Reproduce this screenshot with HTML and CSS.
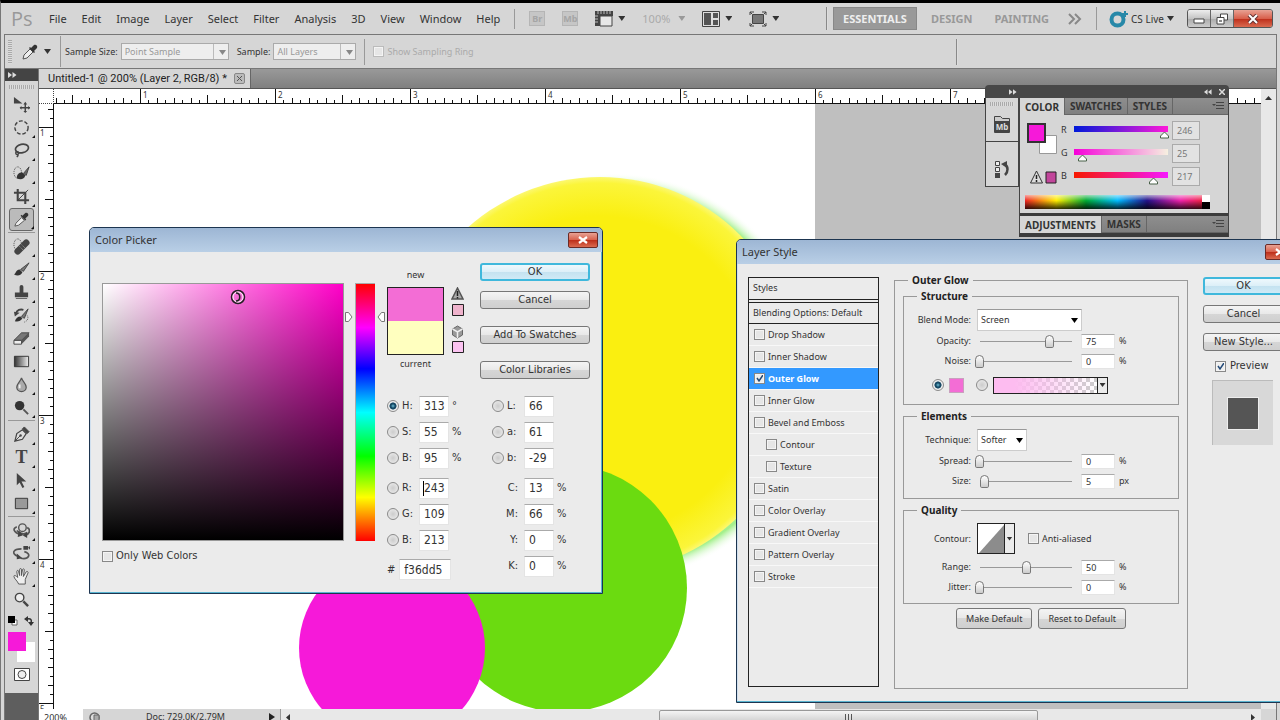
FILE: index.html
```
<!DOCTYPE html>
<html lang="en">
<head>
    <meta charset="UTF-8">
    <meta name="viewport" content="width=device-width, initial-scale=1.0">
    <title>Untitled-1 @ 200%</title>
    <link rel="stylesheet" href="styles.css">
</head>
<body>
    <div class="app">
        <header class="menubar">
            <span class="ps-logo">Ps</span>
            <nav class="menus">
                <a href="#">File</a>
                <a href="#">Edit</a>
                <a href="#">Image</a>
                <a href="#">Layer</a>
                <a href="#">Select</a>
                <a href="#">Filter</a>
                <a href="#">Analysis</a>
                <a href="#">3D</a>
                <a href="#">View</a>
                <a href="#">Window</a>
                <a href="#">Help</a>
            </nav>
            <div class="app-tools">
                <button class="chip" disabled>Br</button>
                <button class="chip" disabled>Mb</button>
                <button class="icon-btn" aria-label="View extras">
                    <svg width="18" height="16" viewBox="0 0 18 16"><path d="M0 0h18v5H5v10H0z" fill="#444"/><path d="M5 5h12v10H5z" fill="#e8e8e8" stroke="#444"/><path d="M3 0v3M6 0v3M9 0v3M12 0v3M15 0v3M0 5h3M0 8h3M0 11h3" stroke="#bbb"/></svg>
                    <span class="caret"></span>
                </button>
                <button class="icon-btn zoom-level" disabled>100% <span class="caret"></span></button>
                <button class="icon-btn" aria-label="Arrange documents">
                    <svg width="18" height="16" viewBox="0 0 18 16"><path d="M.5.5h17v15H.5z" fill="#ddd" stroke="#444"/><path d="M2 2h7v12H2zM11 2h5v5h-5zM11 9h5v5h-5z" fill="#555"/></svg>
                    <span class="caret"></span>
                </button>
                <button class="icon-btn" aria-label="Screen mode">
                    <svg width="18" height="16" viewBox="0 0 18 16"><path d="M3.500 3.500h11v9h-11z" fill="#777" stroke="#444"/><path d="M1 4V1h4M13 1h4v3M1 12v3h4M13 15h4v-3M1 1l2 2M17 1l-2 2M1 15l2-2M17 15l-2-2" fill="none" stroke="#444"/></svg>
                    <span class="caret"></span>
                </button>
            </div>
            <div class="workspaces">
                <button class="workspace active">ESSENTIALS</button>
                <button class="workspace">DESIGN</button>
                <button class="workspace">PAINTING</button>
                <button class="more" aria-label="More workspaces">
                    <svg width="14" height="12" viewBox="0 0 14 12"><path d="M1 1l5 5-5 5M7 1l5 5-5 5" fill="none" stroke="#888" stroke-width="2"/></svg>
                </button>
            </div>
            <button class="cs-live">
                <svg width="19" height="18" viewBox="0 0 19 18"><circle cx="8.500" cy="9.500" r="6" fill="none" stroke="#2788a8" stroke-width="4"/><path d="M16 1v6M13 4h6" stroke="#2788a8" stroke-width="2"/></svg>
                <span>CS Live</span>
                <span class="caret"></span>
            </button>
            <div class="window-buttons">
                <button aria-label="Minimize"><svg width="12" height="12" viewBox="0 0 12 12"><path d="M1 6h10v4H1z" fill="#fff" stroke="#444"/></svg></button>
                <button aria-label="Restore"><svg width="12" height="12" viewBox="0 0 12 12"><path d="M4.500 1h7v6h-7z" fill="#fff" stroke="#444"/><path d="M1 4.500h7V11H1z" fill="#fff" stroke="#444"/><path d="M3 7h3v2H3z" fill="#888"/></svg></button>
                <button class="close" aria-label="Close"><svg width="12" height="10" viewBox="0 0 12 10"><path d="M2 1l8 8M10 1L2 9" stroke="#633" stroke-width="4"/><path d="M2 1l8 8M10 1L2 9" stroke="#fff" stroke-width="2"/></svg></button>
            </div>
        </header>

        <div class="options">
            <span class="grip-v"></span>
            <button class="icon-btn eyedropper" aria-label="Eyedropper presets">
                <svg width="18" height="18" viewBox="0 0 18 18"><path d="M2 16l1-4 6-6 3 3-6 6z" fill="#eee" stroke="#555"/><path d="M8 5l5 5 1-1-1-1 3-3c1-2-1-4-3-3l-3 3-1-1z" fill="#333"/></svg>
                <span class="caret"></span>
            </button>
            <label class="sample-size">Sample Size:
                <select disabled><option>Point Sample</option></select>
            </label>
            <label class="sample-layers">Sample:
                <select disabled><option>All Layers</option></select>
            </label>
            <label class="ring"><input type="checkbox" class="check" disabled>Show Sampling Ring</label>
            <span class="end-mark"></span>
        </div>

        <div class="workarea">
            <aside class="toolbox">
                <div class="dark-head"><svg width="9" height="6" viewBox="0 0 9 6"><path d="M0 0l4 3-4 3zM4.500 0l4 3-4 3z" fill="#ddd"/></svg></div>
                <span class="grip-h"></span>
                <button class="tool" aria-label="Move"><svg viewBox="0 0 18 18"><path d="M1 1l9 7H1z" fill="#444"/><path d="M13 8v9M8 12.500h10" stroke="#444" stroke-width="1.500"/><path d="M11 9h4l-2-3zM11 16h4l-2 2zM9 10.500v4l-2-2zM16 10.500v4l2-2z" fill="#444"/></svg></button>
                <button class="tool more-tools" aria-label="Elliptical marquee"><svg viewBox="0 0 18 18"><circle cx="9" cy="9" r="7" fill="none" stroke="#444" stroke-width="1.500" stroke-dasharray="4 2"/></svg></button>
                <button class="tool more-tools" aria-label="Lasso"><svg viewBox="0 0 18 18"><ellipse cx="9.500" cy="7" rx="7" ry="4.500" fill="none" stroke="#444" stroke-width="1.800" transform="rotate(-12 9 7)"/><path d="M4 10c-2 1-1 4 1 3s1-3-1-3M5 13c1 1 0 2-1 3" fill="none" stroke="#444" stroke-width="1.500"/></svg></button>
                <button class="tool more-tools" aria-label="Quick selection"><svg viewBox="0 0 18 18"><ellipse cx="5" cy="8" rx="4" ry="6" fill="none" stroke="#444" stroke-dasharray="1 1"/><path d="M4 14c0-4 2-6 6-6l3 3c-1 4-5 5-9 3z" fill="#333"/><path d="M11 9l6-7-3 9z" fill="#666" stroke="#444"/></svg></button>
                <button class="tool more-tools" aria-label="Crop"><svg viewBox="0 0 18 18"><path d="M5 1v12h12M1 5h12v12" fill="none" stroke="#444" stroke-width="2.200"/><path d="M5 13L16 2" stroke="#444"/></svg></button>
                <button class="tool more-tools selected" aria-label="Eyedropper"><svg viewBox="0 0 18 18"><path d="M2 16l1-3 6-6 3 3-6 5z" fill="#eee" stroke="#555"/><path d="M8 5l5 5 1-1-1-1 3-3c1-2-1-4-3-3l-3 3-1-1z" fill="#333"/></svg></button>
                <hr>
                <button class="tool more-tools" aria-label="Healing brush"><svg viewBox="0 0 18 18"><ellipse cx="5" cy="7" rx="4" ry="6" fill="none" stroke="#444" stroke-dasharray="1 1"/><path d="M5 14l9-9" stroke="#444" stroke-width="7" stroke-linecap="round"/><path d="M7 9l4 4M9 7l4 4" stroke="#aaa" stroke-dasharray="1 1"/></svg></button>
                <button class="tool more-tools" aria-label="Brush"><svg viewBox="0 0 18 18"><path d="M1 14c2 0 2-5 6-5l3 3c-2 4-6 4-9 2z" fill="#333"/><path d="M8 9l9-7-6 9z" fill="#777" stroke="#444"/></svg></button>
                <button class="tool more-tools" aria-label="Clone stamp"><svg viewBox="0 0 18 18"><path d="M7 3a2 2 0 0 1 4 0v6h5v5H2V9h5zM3 15h12v1H3z" fill="#444"/></svg></button>
                <button class="tool more-tools" aria-label="History brush"><svg viewBox="0 0 18 18"><path d="M2 15c1-3 3-5 6-5l2 2c-2 3-5 4-8 3z" fill="#333"/><path d="M9 10l7-8-4 10z" fill="#777" stroke="#444"/><path d="M3 7c1-4 5-5 8-4" fill="none" stroke="#444" stroke-width="2"/><path d="M1 5l6 1-5 4z" fill="#444"/><path d="M15 9c2 3 0 6-3 7" fill="none" stroke="#555" stroke-dasharray="1 1"/></svg></button>
                <button class="tool more-tools" aria-label="Eraser"><svg viewBox="0 0 18 18"><path d="M1 11L9 3h8l-8 8z" fill="#777" stroke="#444"/><path d="M1 11h8v4H1z" fill="#eee" stroke="#444"/><path d="M9 15l8-8V3l-8 8z" fill="#555"/></svg></button>
                <button class="tool more-tools" aria-label="Gradient"><svg viewBox="0 0 18 18"><defs><linearGradient id="toolGradient"><stop stop-color="#333"/><stop offset="1" stop-color="#eee"/></linearGradient></defs><path d="M1.500 3.500h15v11h-15z" fill="url(#toolGradient)" stroke="#333"/></svg></button>
                <button class="tool more-tools" aria-label="Blur"><svg viewBox="0 0 18 18"><path d="M9 2c1 4 5 6 5 10a5 4.500 0 0 1-10 0c0-4 4-6 5-10z" fill="#aaa" stroke="#555" stroke-width="1.300"/><path d="M7 9v4" stroke="#eee" stroke-width="2"/></svg></button>
                <button class="tool more-tools" aria-label="Burn"><svg viewBox="0 0 18 18"><circle cx="7" cy="7" r="5" fill="#333"/><path d="M11 11l5 5" stroke="#555" stroke-width="2"/></svg></button>
                <hr>
                <button class="tool more-tools" aria-label="Pen"><svg viewBox="0 0 18 18"><path d="M2 16l2-8 6-4 4 4-4 6z" fill="#ddd" stroke="#444" stroke-width="1.300"/><path d="M2 16l6-6M10 3l5 5 2-2-5-5z" fill="#444" stroke="#444"/><circle cx="8" cy="10" r="1.300" fill="#444"/></svg></button>
                <button class="tool more-tools type" aria-label="Type">T</button>
                <button class="tool more-tools" aria-label="Path selection"><svg viewBox="0 0 18 18"><path d="M4 1v13l3-3 3 6 2-1-3-6h5z" fill="#444"/></svg></button>
                <button class="tool more-tools" aria-label="Rectangle"><svg viewBox="0 0 18 18"><path d="M2.500 3.500h13v11h-13z" fill="#999" stroke="#333"/></svg></button>
                <hr>
                <button class="tool more-tools" aria-label="3D rotate"><svg viewBox="0 0 18 18"><circle cx="10" cy="6" r="4" fill="none" stroke="#555" stroke-width="1.500"/><path d="M4 5C-1 7 1 11 7 13M13 14c6-2 5-7 2-8M4 9c3 3 8 5 11 2" fill="none" stroke="#555" stroke-width="1.800"/><path d="M6 9l5 5-6 2zM15 11l-5 3 5 3z" fill="#444"/></svg></button>
                <button class="tool more-tools" aria-label="3D camera"><svg viewBox="0 0 18 18"><path d="M9 4C0 4-2 9 5 12M8 14c9 2 12-5 4-7" fill="none" stroke="#555" stroke-width="1.800"/><path d="M4 9l6 5-6 1zM11 1h5v4h-5zM16 3l2-2v4z" fill="#444"/></svg></button>
                <button class="tool more-tools" aria-label="Hand"><svg viewBox="0 0 18 18"><path d="M6 17c-1-3-5-6-5-8s2-1 4 1L4 4c0-2 2-2 2 0l1 4V2c0-2 2-2 2 0v6l1-6c1-2 2-1 2 0l-1 7 3-5c1-1 2 0 2 1l-3 7v5z" fill="#eee" stroke="#555"/></svg></button>
                <button class="tool" aria-label="Zoom"><svg viewBox="0 0 18 18"><circle cx="7" cy="7" r="4.500" fill="#eee" stroke="#444" stroke-width="1.500"/><path d="M11 11l5 5" stroke="#444" stroke-width="2.500"/></svg></button>
                <div class="swap-row">
                    <svg width="10" height="10" viewBox="0 0 10 10"><path d="M4 4h5v5H4z" fill="#fff" stroke="#666"/><path d="M0 0h7v7H0z" fill="#000"/></svg>
                    <svg width="10" height="10" viewBox="0 0 10 10"><path d="M3 3c4-1 5 1 4 4" fill="none" stroke="#333" stroke-width="1.500"/><path d="M4 0v6L0 3zM4 6h6l-3 4z" fill="#333"/></svg>
                </div>
                <svg class="swatch-pair" width="27" height="30" viewBox="0 0 27 30"><path d="M9 10h18v20H9z" fill="#fff"/><path d="M0 0h18v19H0z" fill="#f619d9"/></svg>
                <button class="mask-btn" aria-label="Quick mask"><svg width="16" height="13" viewBox="0 0 16 13"><path d="M.5.5h15v12H.5z" fill="#fff" stroke="#444"/><circle cx="8" cy="6.500" r="4" fill="#eee" stroke="#444"/></svg></button>
                <div class="toolbox-end"></div>
            </aside>

            <main class="document">
                <div class="doc-tabs">
                    <div class="doc-tab">
                        <span>Untitled-1 @ 200% (Layer 2, RGB/8) *</span>
                        <button class="tab-close" aria-label="Close document"><svg width="7" height="7" viewBox="0 0 7 7"><path d="M1 1l5 5M6 1L1 6" stroke="#555"/></svg></button>
                    </div>
                </div>
                <div class="doc-view">
                    <div class="ruler-corner"></div>
                    <svg class="ruler-top">
                        <defs>
                            <pattern id="inchesX" x="86" width="135" height="15" patternUnits="userSpaceOnUse">
                                <path d="M.5 0v15M67.500 6v9M17.500 9v6M34.500 9v6M51.500 9v6M84.500 9v6M101.500 9v6M118.500 9v6M8.500 11v4M25.500 11v4M42.500 11v4M59.500 11v4M76.500 11v4M93.500 11v4M109.500 11v4M126.500 11v4" stroke="#111"/>
                            </pattern>
                        </defs>
                        <rect width="100%" height="15" fill="url(#inchesX)"/>
                        <g class="ruler-text">
                            <text x="89" y="9">1</text><text x="224" y="9">2</text><text x="359" y="9">3</text><text x="494" y="9">4</text><text x="629" y="9">5</text><text x="764" y="9">6</text><text x="899" y="9">7</text>
                        </g>
                    </svg>
                    <svg class="ruler-left">
                        <defs>
                            <pattern id="inchesY" y="23" width="15" height="144" patternUnits="userSpaceOnUse">
                                <path d="M0 .5h15M6 72.500h9M9 18.500h6M9 36.500h6M9 54.500h6M9 90.500h6M9 108.500h6M9 126.500h6M11 9.500h4M11 27.500h4M11 45.500h4M11 63.500h4M11 81.500h4M11 99.500h4M11 117.500h4M11 135.500h4" stroke="#111"/>
                            </pattern>
                        </defs>
                        <rect width="15" height="100%" fill="url(#inchesY)"/>
                        <g class="ruler-text">
                            <text x="1" y="32">1</text><text x="1" y="176">2</text><text x="1" y="320">3</text><text x="1" y="464">4</text><text x="1" y="608">5</text>
                        </g>
                    </svg>
                    <div class="canvas">
                        <svg class="artboard" width="761" height="606" viewBox="54 104 761 606">
                            <defs>
                                <radialGradient id="glow" gradientUnits="userSpaceOnUse" cx="614" cy="377" r="204">
                                    <stop offset=".930" stop-color="#a4f08c"/><stop offset="1" stop-color="#fff" stop-opacity="0"/>
                                </radialGradient>
                                <radialGradient id="sun" gradientUnits="userSpaceOnUse" cx="600" cy="375" r="198">
                                    <stop offset=".800" stop-color="#faef10"/><stop offset=".970" stop-color="#fbf53a"/><stop offset="1" stop-color="#fcf870"/>
                                </radialGradient>
                            </defs>
                            <path d="M54 104h761v606H54z" fill="#fff"/>
                            <circle cx="614" cy="377" r="204" fill="url(#glow)"/>
                            <circle cx="600" cy="375" r="198" fill="url(#sun)"/>
                            <circle cx="563" cy="588" r="124" fill="#6bdb10"/>
                            <circle cx="392" cy="648" r="93" fill="#f619d9"/>
                        </svg>
                    </div>
                    <div class="scroll-v"><svg width="7" height="5" viewBox="0 0 7 5"><path d="M0 4l3.500-4L7 4z" fill="#333"/></svg></div>
                </div>
                <footer class="status">
                    <input class="zoom-box" value="200%" aria-label="Zoom">
                    <svg class="status-icon" width="11" height="11" viewBox="0 0 11 11"><circle cx="5.500" cy="5.500" r="4.500" fill="#ddd" stroke="#666" stroke-width="1.500"/><path d="M5 3h5v6H5z" fill="#aaa" stroke="#666"/></svg>
                    <span class="doc-size">Doc: 729.0K/2.79M</span>
                    <svg class="status-arrow" width="6" height="8" viewBox="0 0 6 8"><path d="M0 0l6 4-6 4z" fill="#222"/></svg>
                    <div class="scroll-h">
                        <svg width="5" height="7" viewBox="0 0 5 7"><path d="M4 0L0 3.500 4 7z" fill="#333"/></svg>
                        <div class="thumb"><span></span></div>
                        <svg width="5" height="7" viewBox="0 0 5 7"><path d="M0 0l4 3.500L0 7z" fill="#333"/></svg>
                    </div>
                </footer>
            </main>
        </div>
    </div>

    <section class="panels">
        <div class="panels-head">
            <svg width="8" height="6" viewBox="0 0 9 6"><path d="M0 0l4 3-4 3zM4.500 0l4 3-4 3z" fill="#ddd"/></svg>
            <span class="head-right">
                <svg width="8" height="6" viewBox="0 0 9 6"><path d="M4 0L0 3l4 3zM8.500 0l-4 3 4 3z" fill="#ddd"/></svg>
                <svg width="6" height="6" viewBox="0 0 6 6"><path d="M0 0l6 6M6 0L0 6" stroke="#ddd" stroke-width="1.500"/></svg>
            </span>
        </div>
        <div class="panels-body">
            <div class="icon-dock">
                <span class="grip-h"></span>
                <button class="dock-btn" aria-label="Mini Bridge"><svg width="16" height="17" viewBox="0 0 16 17"><path d="M.5 16.500V.5h6l2 2h7v14z" fill="#ccc" stroke="#444"/><path d="M1 5h14v11H1z" fill="#444"/><text x="8" y="14" class="mb-text">Mb</text></svg></button>
                <span class="grip-h second"></span>
                <button class="dock-btn" aria-label="History"><svg width="16" height="18" viewBox="0 0 16 18"><path d="M1.500 1.500h4v4h-4zM1.500 7.500h4v4h-4z" fill="#eee" stroke="#444"/><path d="M1 13h5v5H1z" fill="#444"/><path d="M10 4c5 2 4 8 1 11" fill="none" stroke="#444" stroke-width="2.500"/><path d="M7 4l6-3v7z" fill="#444"/></svg></button>
            </div>
            <div class="panel-stack">
                <div class="panel-tabs">
                    <button class="active">COLOR</button><button>SWATCHES</button><button>STYLES</button>
                    <svg class="panel-menu" width="12" height="8" viewBox="0 0 12 8"><path d="M0 2h4L2 4z" fill="#444"/><path d="M4 .5h8M4 3.500h8M4 6.500h8" stroke="#444"/></svg>
                </div>
                <div class="color-panel">
                    <div class="color-main">
                        <div class="color-swatches">
                            <svg width="31" height="33" viewBox="0 0 31 33"><path d="M12.500 12.500h17v18h-17z" fill="#fff" stroke="#999"/><path d="M1 1h17v18H1z" fill="#f619d9" stroke="#333" stroke-width="2"/></svg>
                            <svg class="gamut" width="28" height="14" viewBox="0 0 28 14"><path d="M6.500 1l6 12H.5z" fill="#ddd" stroke="#333"/><path d="M6.500 5v4M6.500 10v2" stroke="#222" stroke-width="1.500"/><path d="M16 2h10v11H16z" fill="#c2469b" stroke="#222"/></svg>
                        </div>
                        <div class="channels">
                            <label for="chR">R</label><input type="range" id="chR" class="channel red" max="255" value="246"><input class="channel-value" aria-label="Red" value="246">
                            <label for="chG">G</label><input type="range" id="chG" class="channel green" max="255" value="25"><input class="channel-value" aria-label="Green" value="25">
                            <label for="chB">B</label><input type="range" id="chB" class="channel blue" max="255" value="217"><input class="channel-value" aria-label="Blue" value="217">
                        </div>
                    </div>
                    <div class="spectrum"><span></span></div>
                </div>
                <div class="panel-tabs">
                    <button class="active">ADJUSTMENTS</button><button>MASKS</button>
                    <svg class="panel-menu" width="12" height="8" viewBox="0 0 12 8"><path d="M0 2h4L2 4z" fill="#444"/><path d="M4 .5h8M4 3.500h8M4 6.500h8" stroke="#444"/></svg>
                </div>
            </div>
        </div>
    </section>

    <section class="dialog picker">
        <div class="dialog-title">
            <h2>Color Picker</h2>
            <button class="dialog-close" aria-label="Close"><svg width="10" height="8" viewBox="0 0 10 8"><path d="M1 1l8 6M9 1L1 7" stroke="#fff" stroke-width="2.200"/></svg></button>
        </div>
        <form class="picker-body">
            <div class="field-col">
                <div class="field">
                    <svg class="field-cursor" width="16" height="16" viewBox="0 0 16 16"><circle cx="8" cy="8" r="6.500" fill="none" stroke="#222" stroke-width="1.500"/><circle cx="8" cy="8" r="5" fill="none" stroke="#fff"/><path d="M6 4c5 0 5 8 0 8" fill="none" stroke="#222" stroke-width="1.500"/></svg>
                </div>
                <label class="web-colors"><input type="checkbox" class="check">Only Web Colors</label>
            </div>
            <div class="hue-col">
                <svg width="8" height="10" viewBox="0 0 8 10"><path d="M.5.5h3L7 5 3.500 9.500h-3z" fill="#fff" stroke="#777"/></svg>
                <div class="hue"></div>
                <svg width="8" height="10" viewBox="0 0 8 10"><path d="M7.500.5h-3L1 5l3.500 4.500h3z" fill="#fff" stroke="#777"/></svg>
            </div>
            <div class="values-col">
                <div class="preview-row">
                    <div class="compare">
                        <span>new</span>
                        <div class="compare-box"></div>
                        <span>current</span>
                    </div>
                    <svg class="warnings" width="13" height="68" viewBox="0 0 13 68"><path d="M6.500 1l5.500 11H1z" fill="#aaa" stroke="#555" stroke-width="1.500"/><path d="M6.500 4v5M6.500 10v1.500" stroke="#222" stroke-width="1.500"/><path d="M1.500 17.500h11v11h-11z" fill="#efb3cc" stroke="#222"/><path d="M6.500 39l5 3v6l-5 3-5-3v-6z" fill="#999" stroke="#666"/><path d="M6.500 45V51M1.500 42l5 3 5-3" fill="none" stroke="#eee" stroke-width="1.500"/><path d="M1.500 54.500h11v11h-11z" fill="#fbc3f1" stroke="#222"/></svg>
                    <div class="picker-buttons">
                        <button type="button" class="btn primary">OK</button>
                        <button type="button" class="btn">Cancel</button>
                        <button type="button" class="btn apart">Add To Swatches</button>
                        <button type="button" class="btn apart">Color Libraries</button>
                    </div>
                </div>
                <div class="numbers">
                    <div class="number-col">
                        <div class="number"><input type="radio" name="mode" id="mH" class="radio" checked><label for="mH">H:</label><input aria-label="Hue" value="313"><span>°</span></div>
                        <div class="number"><input type="radio" name="mode" id="mS" class="radio"><label for="mS">S:</label><input aria-label="Saturation" value="55"><span>%</span></div>
                        <div class="number"><input type="radio" name="mode" id="mV" class="radio"><label for="mV">B:</label><input aria-label="Brightness" value="95"><span>%</span></div>
                        <div class="number group-start"><input type="radio" name="mode" id="mR" class="radio"><label for="mR">R:</label><span class="caret-field"><input class="focused" aria-label="Red value" value="243"></span></div>
                        <div class="number"><input type="radio" name="mode" id="mG" class="radio"><label for="mG">G:</label><input aria-label="Green value" value="109"></div>
                        <div class="number"><input type="radio" name="mode" id="mB" class="radio"><label for="mB">B:</label><input aria-label="Blue value" value="213"></div>
                        <div class="hex"><label for="hex">#</label><input id="hex" value="f36dd5"></div>
                    </div>
                    <div class="number-col lab">
                        <div class="number"><input type="radio" name="mode" id="mL" class="radio"><label for="mL">L:</label><input class="wide" aria-label="Lightness" value="66"></div>
                        <div class="number"><input type="radio" name="mode" id="mLa" class="radio"><label for="mLa">a:</label><input class="wide" aria-label="Lab a" value="61"></div>
                        <div class="number"><input type="radio" name="mode" id="mLb" class="radio"><label for="mLb">b:</label><input class="wide" aria-label="Lab b" value="-29"></div>
                        <div class="number group-start"><label class="solo" for="inC">C:</label><input id="inC" value="13"><span>%</span></div>
                        <div class="number"><label class="solo" for="inM">M:</label><input id="inM" value="66"><span>%</span></div>
                        <div class="number"><label class="solo" for="inY">Y:</label><input id="inY" value="0"><span>%</span></div>
                        <div class="number"><label class="solo" for="inK">K:</label><input id="inK" value="0"><span>%</span></div>
                    </div>
                </div>
            </div>
        </form>
    </section>

    <section class="dialog layer-style">
        <div class="dialog-title">
            <h2>Layer Style</h2>
            <button class="dialog-close" aria-label="Close"><svg width="10" height="8" viewBox="0 0 10 8"><path d="M1 1l8 6M9 1L1 7" stroke="#fff" stroke-width="2.200"/></svg></button>
        </div>
        <form class="style-body">
            <div class="style-list">
                <div class="list-head">Styles</div>
                <div class="list-head blending">Blending Options: Default</div>
                <label><input type="checkbox" class="check">Drop Shadow</label>
                <label><input type="checkbox" class="check">Inner Shadow</label>
                <label class="active"><input type="checkbox" class="check" checked>Outer Glow</label>
                <label><input type="checkbox" class="check">Inner Glow</label>
                <label><input type="checkbox" class="check">Bevel and Emboss</label>
                <label class="sub"><input type="checkbox" class="check">Contour</label>
                <label class="sub"><input type="checkbox" class="check">Texture</label>
                <label><input type="checkbox" class="check">Satin</label>
                <label><input type="checkbox" class="check">Color Overlay</label>
                <label><input type="checkbox" class="check">Gradient Overlay</label>
                <label><input type="checkbox" class="check">Pattern Overlay</label>
                <label><input type="checkbox" class="check">Stroke</label>
            </div>
            <fieldset class="settings">
                <legend>Outer Glow</legend>
                <fieldset class="structure">
                    <legend>Structure</legend>
                    <div class="row tall"><label for="blend">Blend Mode:</label><select id="blend" class="blend"><option>Screen</option></select></div>
                    <div class="row"><label for="opacity">Opacity:</label><input type="range" id="opacity" class="slider" value="75"><input class="amount" aria-label="Opacity value" value="75"><span>%</span></div>
                    <div class="row"><label for="noise">Noise:</label><input type="range" id="noise" class="slider" value="0"><input class="amount" aria-label="Noise value" value="0"><span>%</span></div>
                    <div class="fill-row">
                        <input type="radio" name="fill" class="radio" aria-label="Solid color" checked>
                        <button type="button" class="glow-color" aria-label="Glow color"></button>
                        <input type="radio" name="fill" class="radio" aria-label="Gradient">
                        <button type="button" class="glow-gradient" aria-label="Glow gradient"><span class="gradient-strip"></span><span class="drop"><span class="caret"></span></span></button>
                    </div>
                </fieldset>
                <fieldset class="elements">
                    <legend>Elements</legend>
                    <div class="row tall"><label for="technique">Technique:</label><select id="technique" class="technique"><option>Softer</option></select></div>
                    <div class="row"><label for="spread">Spread:</label><input type="range" id="spread" class="slider" value="0"><input class="amount" aria-label="Spread value" value="0"><span>%</span></div>
                    <div class="row"><label for="size">Size:</label><input type="range" id="size" class="slider" value="5"><input class="amount" aria-label="Size value" value="5"><span>px</span></div>
                </fieldset>
                <fieldset class="quality">
                    <legend>Quality</legend>
                    <div class="row contour-row">
                        <label for="contour">Contour:</label>
                        <div class="contour-group">
                            <button type="button" id="contour" class="contour"><svg width="26" height="29" viewBox="0 0 26 29"><path d="M0 0h26v29H0z" fill="#fff"/><path d="M1 29L26 1v28z" fill="#8c8c8c"/></svg><span class="drop"><span class="caret"></span></span></button>
                            <label><input type="checkbox" class="check">Anti-aliased</label>
                        </div>
                    </div>
                    <div class="row"><label for="range">Range:</label><input type="range" id="range" class="slider" value="50"><input class="amount" aria-label="Range value" value="50"><span>%</span></div>
                    <div class="row"><label for="jitter">Jitter:</label><input type="range" id="jitter" class="slider" value="0"><input class="amount" aria-label="Jitter value" value="0"><span>%</span></div>
                </fieldset>
                <div class="defaults">
                    <button type="button" class="btn small">Make Default</button>
                    <button type="button" class="btn small">Reset to Default</button>
                </div>
            </fieldset>
            <div class="style-buttons">
                <button type="button" class="btn primary">OK</button>
                <button type="button" class="btn">Cancel</button>
                <button type="button" class="btn">New Style...</button>
                <label class="preview"><input type="checkbox" class="check" checked>Preview</label>
                <div class="preview-box"><span></span></div>
            </div>
        </form>
    </section>
</body>
</html>
```
FILE: styles.css
```
* {
    margin: 0;
    padding: 0;
    box-sizing: border-box;
}

body {
    font-family: "Noto Sans", "Open Sans", sans-serif;
    font-size: 9px;
    line-height: 14px;
    color: #333;
    background-color: #d6d6d6;
    height: 100vh;
    overflow: hidden;
    position: relative;
}

button,
input,
select {
    font: inherit;
    color: inherit;
}

button {
    background: none;
    border: none;
}

a {
    color: inherit;
    text-decoration: none;
}

svg {
    display: block;
    flex-shrink: 0;
}

.caret {
    width: 7px;
    height: 5px;
    background-color: #333;
    clip-path: polygon(0 0, 100% 0, 50% 100%);
    flex-shrink: 0;
}

/* app frame */
.app {
    height: calc(100vh + 5px);
    display: flex;
    flex-direction: column;
    border-top: 3px solid #000;
    border-left: 1px solid #777;
    padding: 0 3px;
}

.menubar {
    height: 31px;
    display: flex;
    align-items: center;
    font-size: 11px;
    padding: 0 4px 0 7px;
    flex-shrink: 0;
}

.ps-logo {
    font-family: "Open Sans", sans-serif;
    font-size: 20px;
    width: 38px;
    color: #999;
}

.menus {
    display: flex;
    gap: 15px;
    padding-right: 14px;
    border-right: 1px solid #999;
    line-height: 20px;
}

.app-tools {
    display: flex;
    align-items: center;
    gap: 17px;
    padding-left: 14px;
}

.chip {
    width: 16px;
    height: 15px;
    font-size: 9px;
    line-height: 13px;
    font-weight: bold;
    color: #a5a5a5;
    background-color: #c6c6c6;
    border: 1px solid #b5b5b5;
}

.icon-btn {
    display: flex;
    align-items: center;
    gap: 5px;
}

.zoom-level {
    color: #aaa;
    gap: 8px;
}

.zoom-level .caret {
    background-color: #999;
}

.workspaces {
    display: flex;
    align-items: center;
    margin-left: auto;
    border-left: 2px groove #ddd;
    padding: 0 14px 0 5px;
    border-right: 1px solid #999;
}

.workspace {
    height: 23px;
    padding: 0 11px;
    font-size: 11px;
    font-weight: bold;
    color: #999;
}

.workspace.active {
    color: #eee;
    background-color: #999;
    border: 1px solid #888;
    margin-right: 3px;
    padding: 0 9px;
}

.more {
    margin-left: 8px;
}

.cs-live {
    display: flex;
    align-items: center;
    gap: 3px;
    padding: 0 13px 0 12px;
    font-size: 10px;
}

.window-buttons {
    display: flex;
    border: 1px solid #555;
    border-radius: 3px;
    overflow: hidden;
}

.window-buttons button {
    width: 23px;
    height: 17px;
    display: flex;
    align-items: center;
    justify-content: center;
    background: linear-gradient(#eee, #c4c4c4 50%, #aaa 50%, #ccc);
    border-right: 1px solid #666;
}

.window-buttons .close {
    width: 38px;
    border-right: none;
}

.window-buttons .close,
.dialog-close {
    background: linear-gradient(#e8a294, #d8604c 50%, #bc2c18 50%, #da6a50);
}

/* options bar */
.options {
    height: 35px;
    display: flex;
    align-items: center;
    border: 1px solid #777;
    padding-left: 3px;
    flex-shrink: 0;
}

.grip-v {
    width: 4px;
    height: 24px;
    background: repeating-linear-gradient(#aaa 0 1px, #ddd 1px 2px);
}

.eyedropper {
    margin-left: 9px;
    height: 31px;
    padding-right: 9px;
    border-right: 1px solid #999;
}

.options label {
    display: flex;
    align-items: center;
}

.sample-size,
.sample-layers {
    gap: 3px;
}

.sample-size {
    margin-left: 4px;
}

.sample-layers {
    margin-left: 8px;
    padding-right: 8px;
    border-right: 1px solid #999;
    height: 26px;
}

select {
    appearance: none;
    border: 1px solid #ccc;
    border-top-color: #999;
    border-radius: 0;
    background: #fff url("data:image/svg+xml,%3Csvg xmlns='http://www.w3.org/2000/svg' width='7' height='5'%3E%3Cpath d='M0 0h7L3.500 5z'/%3E%3C/svg%3E") no-repeat right 3px center;
    padding: 0 3px;
}

.options select {
    height: 17px;
    color: #999;
    border: 1px solid #aaa;
    background-color: #eee;
    opacity: 1;
    background-image: url("data:image/svg+xml,%3Csvg xmlns='http://www.w3.org/2000/svg' width='15' height='15'%3E%3Cpath d='M.5 0v15' stroke='%23bbb'/%3E%3Cpath d='M6 6h7L9.500 11z' fill='%23888'/%3E%3C/svg%3E");
    background-position: right 0 center;
}

.sample-size select {
    width: 108px;
}

.sample-layers select {
    width: 83px;
}

.options .ring {
    margin-left: 8px;
    gap: 3px;
    color: #aaa;
}

.end-mark {
    height: 26px;
    border-right: 2px groove #ddd;
    margin-left: 482px;
}

/* form bits */
.check {
    appearance: none;
    width: 11px;
    height: 11px;
    flex-shrink: 0;
    border: 1px solid #888;
    background-color: #e6e6e6;
    box-shadow: inset 0 0 0 1px #f4f4f4;
}

.check:checked {
    background: #eee url("data:image/svg+xml,%3Csvg xmlns='http://www.w3.org/2000/svg' viewBox='0 0 9 9'%3E%3Cpath d='M2 4l2 3 4-6' fill='none' stroke='%23234a78' stroke-width='1.500'/%3E%3C/svg%3E") center / 9px;
}

.check:disabled {
    border-color: #bbb;
}

.radio {
    appearance: none;
    width: 12px;
    height: 12px;
    flex-shrink: 0;
    border: 1px solid #8a8a8a;
    border-radius: 50%;
    background: radial-gradient(circle, #ccc, #f0f0f0);
}

.radio:checked {
    background: radial-gradient(circle, #6fc0d8 0, #174a66 30%, #174a66 45%, #eee 55%);
}

.btn {
    height: 18px;
    line-height: 16px;
    text-align: center;
    font-family: "DejaVu Sans Condensed", sans-serif;
    font-size: 11px;
    border: 1px solid #777;
    border-radius: 3px;
    background: linear-gradient(#f4f4f4, #e8e8e8 50%, #d6d6d6 50%, #cfcfcf);
    white-space: nowrap;
}

.btn.primary {
    border: 2px solid #3fb8dc;
    line-height: 14px;
    background: linear-gradient(#eef8fc, #dceff8 50%, #c4e2f0 50%, #cfeaf6);
}

.btn.small {
    height: 21px;
    font-family: inherit;
    font-size: 9px;
}

/* toolbox */
.workarea {
    flex: 1;
    min-height: 0;
    display: flex;
    border-right: 1px solid #777;
}

.toolbox {
    width: 35px;
    display: flex;
    flex-direction: column;
    border-left: 1px solid #777;
    border-right: 1px solid #777;
}

.dark-head {
    height: 12px;
    background-color: #444;
    padding: 3px;
}

.grip-h {
    height: 4px;
    margin: 4px 4px;
    background: repeating-linear-gradient(90deg, #aaa 0 1px, #ddd 1px 2px);
}

.tool {
    height: 23px;
    margin: 0 4px;
    position: relative;
    display: flex;
    align-items: center;
    justify-content: center;
}

.tool svg {
    width: 17px;
    height: 17px;
}

.more-tools::after {
    content: "";
    position: absolute;
    right: -1px;
    bottom: 1px;
    width: 3px;
    height: 3px;
    background-color: #111;
    clip-path: polygon(100% 0, 100% 100%, 0 100%);
}

.tool.selected {
    border: 1px solid #666;
    border-radius: 3px;
    background-color: #bbb;
}

.tool.type {
    font: bold 18px "Liberation Serif", serif;
    color: #444;
}

.toolbox hr {
    border: none;
    border-top: 1px solid #999;
    margin: 1px 3px 2px;
}

.swap-row {
    display: flex;
    justify-content: space-between;
    padding: 5px 4px 6px 3px;
}

.swatch-pair {
    margin-left: 3px;
}

.mask-btn {
    margin: 6px auto 0;
}

.toolbox-end {
    flex: 1;
    margin-top: 12px;
    background-color: #5e5e5e;
}

/* document */
.document {
    flex: 1;
    min-width: 0;
    display: flex;
    flex-direction: column;
}

.doc-tabs {
    height: 20px;
    display: flex;
    flex-shrink: 0;
    background: linear-gradient(#999, #808080);
    border-bottom: 1px solid #555;
}

.doc-tab {
    display: flex;
    align-items: center;
    gap: 7px;
    padding: 0 5px 0 9px;
    font-family: Roboto, sans-serif;
    font-size: 11px;
    color: #222;
    background-color: #d6d6d6;
    border-right: 1px solid #666;
}

.doc-tab span {
    white-space: nowrap;
}

.tab-close {
    padding: 1px;
    border: 1px solid #888;
    border-radius: 2px;
    background-color: #bbb;
}

.doc-view {
    flex: 1;
    min-height: 0;
    display: grid;
    grid-template-columns: 15px 1fr 15px;
    grid-template-rows: 15px 1fr;
}

.ruler-corner {
    background-color: #fff;
    border-bottom: 1px dotted #444;
    border-right: 1px dotted #444;
}

.ruler-top {
    width: 100%;
    height: 15px;
    background-color: #fff;
    border-bottom: 1px solid #111;
}

.ruler-left {
    width: 15px;
    height: 100%;
    background-color: #fff;
    border-right: 1px solid #111;
    grid-row: 2;
    grid-column: 1;
}

.ruler-text {
    font-size: 8px;
    fill: #333;
}

.canvas {
    grid-row: 2;
    grid-column: 2;
    background-color: #bfbfbf;
    overflow: hidden;
}

.scroll-v {
    grid-row: 1 / 3;
    grid-column: 3;
    background-color: #e8e8e8;
    padding: 7px 4px;
}

.status {
    height: 16px;
    display: flex;
    align-items: center;
    flex-shrink: 0;
    background-color: #d6d6d6;
}

.zoom-box {
    width: 44px;
    height: 16px;
    padding-left: 5px;
    border: none;
    background-color: #fff;
}

.status-icon {
    margin-left: 6px;
}

.doc-size {
    margin-left: 46px;
}

.status-arrow {
    margin-left: 44px;
}

.scroll-h {
    flex: 1;
    height: 16px;
    margin-left: 5px;
    margin-right: 15px;
    padding: 0 5px;
    display: flex;
    align-items: center;
    justify-content: space-between;
    background-color: #e8e8e8;
    border-left: 1px solid #999;
}

.thumb {
    width: 39%;
    height: 14px;
    margin-left: 16%;
    display: flex;
    align-items: center;
    justify-content: center;
    border: 1px solid #999;
    border-radius: 2px;
    background: linear-gradient(#f4f4f4, #ccc);
}

.thumb span {
    width: 8px;
    height: 7px;
    background: repeating-linear-gradient(90deg, #555 0 1px, transparent 1px 3px);
}

/* floating panels */
.panels {
    position: absolute;
    left: 985px;
    top: 85px;
    width: 244px;
}

.panels-head {
    height: 13px;
    display: flex;
    align-items: center;
    justify-content: space-between;
    padding: 0 4px 0 24px;
    background-color: #484848;
    border-radius: 4px 4px 0 0;
}

.head-right {
    display: flex;
    align-items: center;
    gap: 7px;
}

.panels-body {
    display: flex;
    align-items: flex-start;
}

.icon-dock {
    width: 34px;
    height: 89px;
    display: flex;
    flex-direction: column;
    background-color: #d6d6d6;
    border: 1px solid #444;
    border-top: none;
}

.dock-btn {
    display: flex;
    justify-content: center;
    height: 31px;
    padding-top: 6px;
}

.icon-dock .second {
    height: 9px;
    margin: 0 0 4px;
    border-top: 1px solid #444;
    padding: 4px;
    background-clip: content-box;
}

.mb-text {
    font-size: 8px;
    font-weight: bold;
    text-anchor: middle;
    fill: #ddd;
}

.panel-stack {
    flex: 1;
    border: 1px solid #444;
    border-top: none;
    border-bottom: 4px solid #3c3c3c;
}

.panel-tabs {
    height: 17px;
    display: flex;
    background: linear-gradient(#8e8e8e, #808080);
    border-bottom: 1px solid #666;
}

.panel-tabs button {
    padding: 0 5px;
    font-size: 10px;
    line-height: 16px;
    font-weight: bold;
    color: #333;
    border-right: 1px solid #666;
}

.panel-tabs .active {
    height: 17px;
    background-color: #d6d6d6;
}

.panel-menu {
    margin: 4px 4px 0 auto;
}

.color-panel {
    height: 101px;
    padding: 4px 5px;
    background-color: #d6d6d6;
    border-bottom: 3px solid #3c3c3c;
}

.color-main {
    display: flex;
    gap: 4px;
}

.color-swatches {
    width: 32px;
    padding: 4px 0 0 2px;
}

.gamut {
    margin: 14px 0 0 3px;
}

.channels {
    display: grid;
    grid-template-columns: 8px 103px 28px;
    grid-auto-rows: 23px;
}

.channels label {
    line-height: 21px;
}

.channel {
    appearance: none;
    width: 103px;
    height: 18px;
    margin-top: 3px;
    background-color: transparent;
    background-repeat: no-repeat;
    background-position: center 4px;
    background-size: calc(100% - 9px) 6px;
}

.channel.red {
    background-image: linear-gradient(90deg, #0019d9, #ff19d9);
}

.channel.green {
    background-image: linear-gradient(90deg, #f600d9, #f6f0e0);
}

.channel.blue {
    background-image: linear-gradient(90deg, #f61900, #f619ff);
}

.channel::-webkit-slider-thumb {
    appearance: none;
    width: 9px;
    height: 8px;
    margin-top: 7px;
    background: url("data:image/svg+xml,%3Csvg xmlns='http://www.w3.org/2000/svg' width='9' height='8'%3E%3Cpath d='M4.500 1L8.500 5v2H.5V5z' fill='%23fff' stroke='%23486048'/%3E%3C/svg%3E");
}

.channel-value {
    width: 28px;
    height: 19px;
    margin-top: 2px;
    padding-left: 4px;
    border: 1px solid #aaa;
    background-color: #e2e2e2;
    color: #777;
}

.spectrum {
    width: 185px;
    height: 14px;
    margin-top: 7px;
    display: flex;
    justify-content: flex-end;
    background: linear-gradient(rgba(255, 255, 255, .6), transparent 40%, rgba(0, 0, 0, .8)), linear-gradient(90deg, #e22, #fe0 17%, #0a3 33%, #0bf 50%, #218 66%, #e2a 84%, #e22);
}

.spectrum span {
    width: 8px;
    background: linear-gradient(#fff 50%, #000 50%);
}

/* dialogs */
.dialog {
    position: absolute;
    border: 1px solid #1d3550;
    border-radius: 5px 5px 0 0;
    background-color: #ebebeb;
    box-shadow: inset -1px -1px #59b4d0, inset 1px 1px #cfdfee;
}

.dialog-title {
    height: 24px;
    display: flex;
    align-items: center;
    justify-content: space-between;
    padding: 0 4px 0 5px;
    background: linear-gradient(#9db6d4, #b9cfe6);
    border-radius: 4px 4px 0 0;
}

.dialog-title h2 {
    font-size: 11px;
    font-weight: normal;
}

.dialog-close {
    width: 30px;
    height: 16px;
    display: flex;
    align-items: center;
    justify-content: center;
    border: 1px solid #6b2a26;
    border-radius: 2px;
}

.picker {
    left: 89px;
    top: 227px;
    width: 514px;
}

.picker-body {
    display: flex;
    padding: 11px 12px 13px;
    font-family: "DejaVu Sans Condensed", sans-serif;
    font-size: 11px;
}

.field-col {
    width: 242px;
    padding-top: 20px;
}

.field {
    height: 258px;
    position: relative;
    border: 1px solid #999;
    background: linear-gradient(transparent, #000), linear-gradient(90deg, #fff, #ff00c8);
}

/* the cursor sits at saturation 55%, brightness 95% */
.field-cursor {
    position: absolute;
    left: 53%;
    top: 2%;
}

.web-colors {
    display: flex;
    align-items: center;
    gap: 3px;
    margin-top: 8px;
}

.hue-col {
    display: flex;
    gap: 2px;
    margin: 20px 0 0 1px;
}

.hue-col svg {
    margin-top: 29px;
}

.hue {
    width: 20px;
    height: 258px;
    border: 1px solid #aaa;
    border-right: none;
    border-bottom: none;
    background: linear-gradient(red, magenta 17%, blue 33%, cyan 50%, lime 67%, yellow 83%, red);
}

.values-col {
    flex: 1;
    padding-left: 2px;
}

.preview-row {
    display: flex;
}

.compare {
    width: 57px;
    padding-top: 5px;
    text-align: center;
    font-family: "Noto Sans", sans-serif;
    font-size: 9px;
}

.compare span {
    display: block;
}

.compare-box {
    height: 68px;
    margin: 5px 0 2px;
    border: 1px solid #222;
    background: linear-gradient(#f36dd5 50%, #ffffbf 50%);
}

.warnings {
    margin: 24px 16px 0 7px;
}

.picker-buttons {
    flex: 1;
    display: flex;
    flex-direction: column;
    gap: 10px;
}

.picker-buttons .apart {
    margin-top: 7px;
}

.numbers {
    display: flex;
    justify-content: space-between;
    margin-top: 14px;
}

.number-col {
    width: 90px;
}

.number-col.lab {
    width: 98px;
}

.number {
    height: 26px;
    display: grid;
    grid-template-columns: 12px 14px 30px auto;
    column-gap: 3px;
    align-items: center;
}

.number.group-start {
    margin-top: 4px;
}

.number input:not(.radio),
.hex input {
    width: 30px;
    height: 21px;
    padding-left: 4px;
    font-size: 12px;
    background-color: #fff;
    border: 1px solid #e4e4e4;
    border-top-color: #aaa;
}

.number .wide {
    width: 37px;
}

.number .focused {
    display: block;
    border-color: #6c9ccc;
}

/* text caret in front of the focused value */
.caret-field {
    position: relative;
}

.caret-field::before {
    content: "";
    position: absolute;
    left: 4px;
    top: 3px;
    width: 1px;
    height: 15px;
    background-color: #000;
}

.number .solo {
    grid-column: 1 / 3;
    text-align: right;
    padding-right: 3px;
}

.hex {
    display: flex;
    align-items: center;
    gap: 4px;
    margin-top: 6px;
}

.hex input {
    width: 52px;
}

/* layer style */
.layer-style {
    left: 736px;
    right: -20px;
    top: 239px;
}

.style-body {
    display: flex;
    gap: 15px;
    padding: 13px 0 13px 11px;
}

.style-list {
    width: 131px;
    border: 1px solid #222;
    margin-bottom: 2px;
}

.list-head {
    height: 22px;
    padding-left: 4px;
    line-height: 20px;
    border-bottom: 1px solid #222;
}

.list-head.blending {
    margin-top: 2px;
    border-top: 1px solid #222;
}

.style-list label {
    height: 22px;
    display: flex;
    align-items: center;
    gap: 3px;
    padding-left: 5px;
    border-bottom: 1px solid #f8f8f8;
}

.style-list .sub {
    padding-left: 17px;
}

.style-list .active {
    background-color: #3399ff;
    color: #fff;
    font-weight: bold;
}

fieldset {
    min-width: 0;
    border: 1px solid #999;
}

legend {
    margin-left: 13px;
    padding: 0 4px;
    font-size: 10px;
    font-weight: bold;
    color: #222;
}

.settings {
    width: 294px;
    margin-top: -4px;
    padding: 2px 8px 0;
    height: 416px;
}

.settings > legend {
    margin-left: 5px;
}

.settings fieldset {
    margin-bottom: 4px;
}

.structure {
    padding: 6px 0 5px;
}

.elements {
    padding: 6px 0 7px;
}

.quality {
    padding: 6px 0 6px;
}

.row {
    height: 20px;
    display: grid;
    grid-template-columns: 67px 102px 34px auto;
    column-gap: 4px;
    align-items: center;
}

.row > label {
    text-align: right;
}

.row.tall {
    height: 22px;
}

.row select {
    height: 22px;
    margin-left: 2px;
}

.row .blend {
    grid-column: 2 / 4;
    width: 105px;
}

.row .technique {
    width: 50px;
}

.slider {
    appearance: none;
    width: 102px;
    height: 14px;
    background: linear-gradient(#999, #999) no-repeat center / calc(100% - 10px) 1px;
}

.slider::-webkit-slider-thumb {
    appearance: none;
    width: 9px;
    height: 13px;
    border: 1px solid #777;
    border-radius: 5px 5px 2px 2px;
    background: linear-gradient(#fff, #ccc);
}

.amount {
    width: 34px;
    height: 15px;
    padding-left: 4px;
    border: 1px solid #e4e4e4;
    border-top-color: #aaa;
    background-color: #fff;
}

.fill-row {
    height: 28px;
    display: flex;
    align-items: center;
    padding-left: 28px;
}

.glow-color {
    width: 15px;
    height: 15px;
    margin: 0 12px 0 5px;
    border: 1px solid #c8a0be;
    background-color: #f36dd5;
}

.glow-gradient {
    width: 115px;
    height: 17px;
    margin-left: 5px;
    display: flex;
    border: 1px solid #222;
}

.gradient-strip {
    flex: 1;
    background: linear-gradient(90deg, #fdbcf0 20%, transparent), repeating-conic-gradient(#ccc 0 25%, #fff 0 50%) 0 0 / 8px 8px;
}

.drop {
    width: 10px;
    display: flex;
    align-items: center;
    justify-content: center;
    border-left: 1px solid #222;
}

.drop .caret {
    width: 6px;
    height: 4px;
}

.row.contour-row {
    height: 34px;
    align-items: start;
}

.contour-row > label {
    line-height: 32px;
}

.contour-group {
    grid-column: 2 / 5;
    display: flex;
    align-items: center;
    margin-left: 2px;
}

.contour {
    height: 31px;
    display: flex;
    border: 1px solid #222;
}

.contour .drop {
    height: 29px;
}

.contour-group label {
    display: flex;
    align-items: center;
    gap: 3px;
    margin-left: 13px;
}

.defaults {
    display: flex;
    justify-content: center;
    gap: 6px;
}

.defaults .btn {
    padding: 0 9px;
}

.style-buttons {
    width: 81px;
    display: flex;
    flex-direction: column;
    gap: 10px;
}

.preview {
    display: flex;
    align-items: center;
    gap: 4px;
    padding: 1px 0 0 12px;
    margin-top: -3px;
    font-family: "DejaVu Sans Condensed", sans-serif;
    font-size: 11px;
}

.preview-box {
    width: 61px;
    height: 65px;
    margin: -3px 0 0 9px;
    display: flex;
    align-items: center;
    justify-content: center;
    background-color: #d8d8d8;
    border-top: 1px solid #bbb;
    border-left: 1px solid #bbb;
}

.preview-box span {
    width: 32px;
    height: 33px;
    border: 1px solid #eee;
    background-color: #555;
}
```
